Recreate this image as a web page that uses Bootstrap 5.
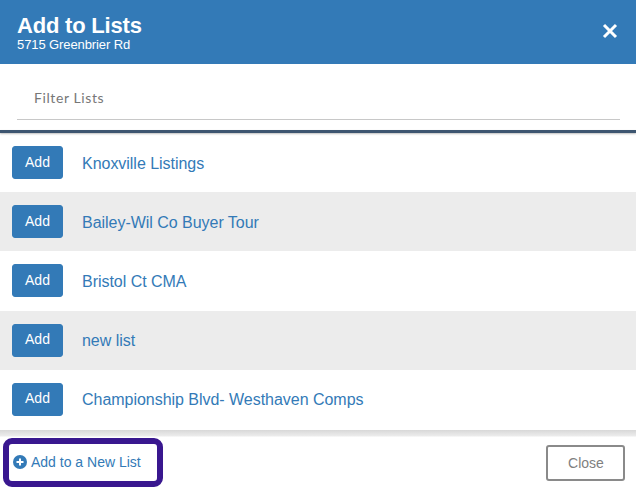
<!DOCTYPE html>
<html lang="en">
<head>
  <meta charset="UTF-8">
  <title>Add to Lists</title>
  <link href="https://cdn.jsdelivr.net/npm/bootstrap@5.3.0/dist/css/bootstrap.min.css" rel="stylesheet">
  <style>
    html, body { height: 487px; overflow: hidden; }
    body { font-family: "Liberation Sans", Arial, sans-serif; background: #fff; }
    .sheet { height: 487px; }
    .sheet-head { height: 64px; background: #337ab7; color: #fff; padding: 13px 17px 0; }
    .sheet-title { font-size: 22px; font-weight: 700; line-height: 26px; margin: 0; letter-spacing: -.2px; }
    .sheet-sub { font-size: 13px; line-height: 12px; letter-spacing: -.1px; }
    .close-x { background: none; border: 0; padding: 0; width: 18px; height: 18px; margin: 9px 0 0 0; line-height: 0; }
    .filter-wrap { height: 66px; padding: 0 16px 0 17px; }
    .filter-input { height: 56px; width: 100%; border: 0; border-bottom: 1px solid #c8c8c8; border-radius: 0; padding: 12px 17px 0; font-family: Lato, sans-serif; font-size: 14px; letter-spacing: .6px; outline: 0; }
    .filter-input::placeholder { color: #777; opacity: 1; }
    .rule-dark { height: 3px; background: #3d5570; box-shadow: 0 1px 2px rgba(0,0,0,.25); }
    .list-rows { height: 297px; overflow: hidden; }
    .list-row { height: 59.2px; padding-left: 12px; gap: 19px; }
    .list-row:nth-child(even) { background: #ececec; }
    .add-btn { width: 51px; height: 33px; padding: 0 0 1px; background: #337ab7; border-color: #337ab7; border-radius: 3px; color: #fff; font-size: 14px; }
    .list-name { color: #337ab7; font-size: 16px; padding-top: 2px; letter-spacing: -.03px; text-decoration: none; }
    .sheet-foot { height: 57px; background: linear-gradient(#d8d8d8, #ececec 6px, #fff 7px); padding: 8px 11px 0 3px; }
    .new-list { width: 160px; height: 49px; border: 6px solid #39178f; border-radius: 9px; padding: 0 0 0 4px; gap: 4px; color: #337ab7; font-size: 14px; text-decoration: none; }
    .new-list svg { margin-top: -2px; }
    .close-btn { width: 79px; height: 36px; padding: 0 0 0 1px; margin-top: 7px; background: #fff; border: 2px solid #8a8a8a; border-radius: 3px; color: #808080; font-size: 14px; }
  </style>
</head>
<body>
  <div class="sheet d-flex flex-column">
    <header class="sheet-head d-flex justify-content-between align-items-start">
      <div>
        <h1 class="sheet-title">Add to Lists</h1>
        <div class="sheet-sub">5715 Greenbrier Rd</div>
      </div>
      <button type="button" class="close-x" aria-label="Close">
        <svg width="18" height="18" viewBox="0 0 18 18"><path d="M3 3 15 15M15 3 3 15" stroke="#fff" stroke-width="3"/></svg>
      </button>
    </header>

    <div class="filter-wrap">
      <input type="text" class="filter-input" placeholder="Filter Lists">
    </div>
    <div class="rule-dark"></div>

    <div class="list-rows" id="rows"></div>

    <footer class="sheet-foot d-flex justify-content-between align-items-start">
      <a href="#" class="new-list d-flex align-items-center">
        <svg width="14" height="14" viewBox="0 0 14 14"><circle cx="7" cy="7" r="7" fill="#337ab7"/><path d="M7 3.5v7M3.5 7h7" stroke="#fff" stroke-width="2"/></svg>
        Add to a New List
      </a>
      <button type="button" class="btn close-btn">Close</button>
    </footer>
  </div>

  <script>
    const lists = ["Knoxville Listings", "Bailey-Wil Co Buyer Tour", "Bristol Ct CMA", "new list", "Championship Blvd- Westhaven Comps"];
    document.getElementById("rows").innerHTML = lists.map(name => `
      <div class="list-row d-flex align-items-center">
        <button type="button" class="btn add-btn">Add</button>
        <a href="#" class="list-name">${name}</a>
      </div>
    `).join("");
  </script>
  <script src="https://cdn.jsdelivr.net/npm/bootstrap@5.3.0/dist/js/bootstrap.bundle.min.js"></script>
</body>
</html>
